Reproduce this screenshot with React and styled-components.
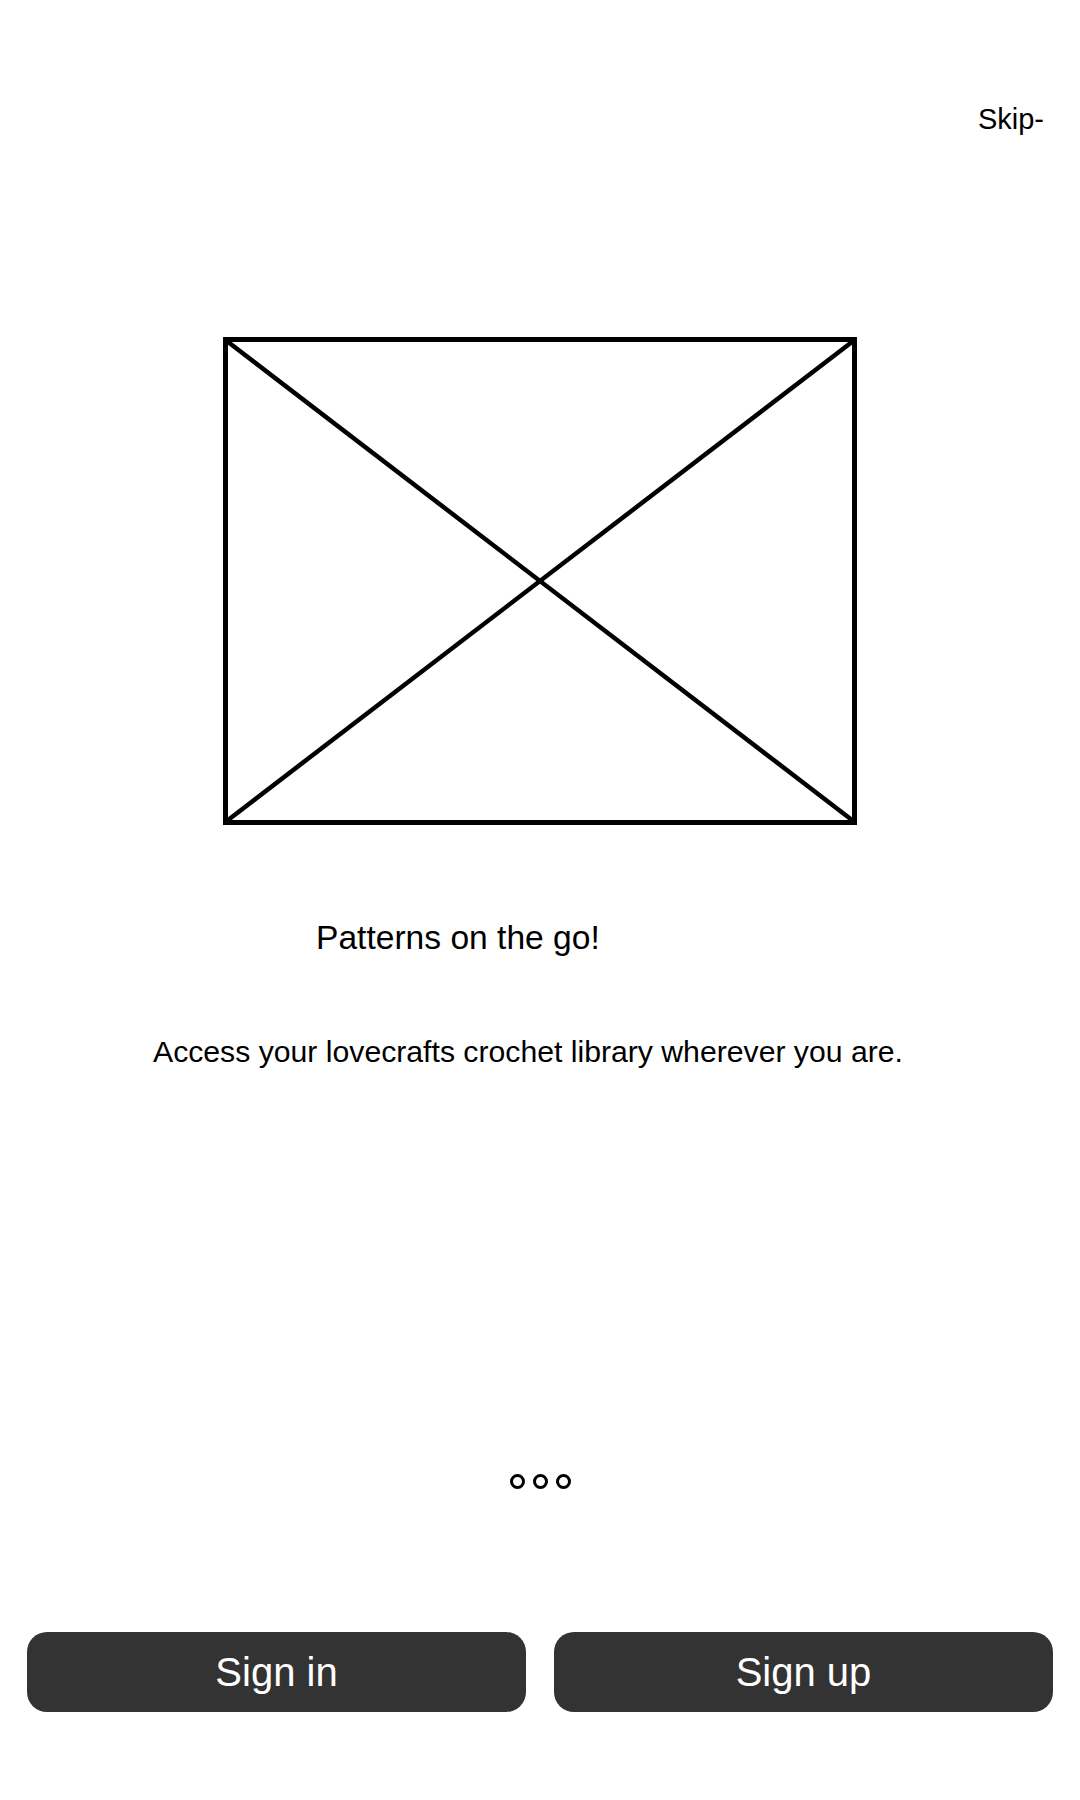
import React from "react";
import styled, { createGlobalStyle } from "styled-components";

const Global = createGlobalStyle`
  html, body { margin: 0; padding: 0; background: #ffffff; }
  body { font-family: "Liberation Sans", Arial, sans-serif; color: #000; }
  * { box-sizing: border-box; }
`;

const Screen = styled.div`
  width: 1080px;
  height: 1800px;
  display: flex;
  flex-direction: column;
  background: #ffffff;
  overflow: hidden;
`;

const TopBar = styled.header`
  display: flex;
  justify-content: flex-end;
  padding: 103px 36px 0 0;
`;

const SkipLink = styled.span`
  font-size: 29px;
  line-height: 32px;
  color: #000;
  cursor: pointer;
`;

const Placeholder = styled.div`
  align-self: center;
  width: 634px;
  height: 488px;
  margin-top: 202px;
  border: 5px solid #000;
  display: flex;
`;

const Cross = styled.svg`
  width: 100%;
  height: 100%;
  display: block;
`;

const Title = styled.h1`
  margin: 93px 0 0 316px;
  font-size: 33.6px;
  line-height: 40px;
  font-weight: 400;
`;

const Description = styled.p`
  margin: 76px 0 0 153px;
  font-size: 30.2px;
  line-height: 36px;
`;

const Dots = styled.div`
  display: flex;
  justify-content: center;
  gap: 8px;
  margin-top: 404px;
`;

const Dot = styled.span`
  width: 15px;
  height: 15px;
  border-radius: 50%;
  border: 3px solid #000;
  background: ${(p) => (p.$active ? "#000" : "transparent")};
`;

const Actions = styled.div`
  display: grid;
  grid-template-columns: 1fr 1fr;
  gap: 28px;
  padding: 0 27px;
  margin-top: 143px;
`;

const ActionButton = styled.button`
  height: 80px;
  border: none;
  border-radius: 20px;
  background: #333333;
  color: #ffffff;
  font-family: "Liberation Sans", Arial, sans-serif;
  font-size: 40px;
  line-height: 46px;
  cursor: pointer;
`;

export default function App() {
  return (
    <>
      <Global />
      <Screen>
        <TopBar>
          <SkipLink>Skip-</SkipLink>
        </TopBar>
        <Placeholder>
          <Cross viewBox="0 0 100 100" preserveAspectRatio="none">
            <line x1="0" y1="0" x2="100" y2="100" stroke="#000" strokeWidth="4.5" vectorEffect="non-scaling-stroke" />
            <line x1="100" y1="0" x2="0" y2="100" stroke="#000" strokeWidth="4.5" vectorEffect="non-scaling-stroke" />
          </Cross>
        </Placeholder>
        <Title>Patterns on the go!</Title>
        <Description>Access your lovecrafts crochet library wherever you are.</Description>
        <Dots>
          <Dot />
          <Dot />
          <Dot />
        </Dots>
        <Actions>
          <ActionButton>Sign in</ActionButton>
          <ActionButton>Sign up</ActionButton>
        </Actions>
      </Screen>
    </>
  );
}
